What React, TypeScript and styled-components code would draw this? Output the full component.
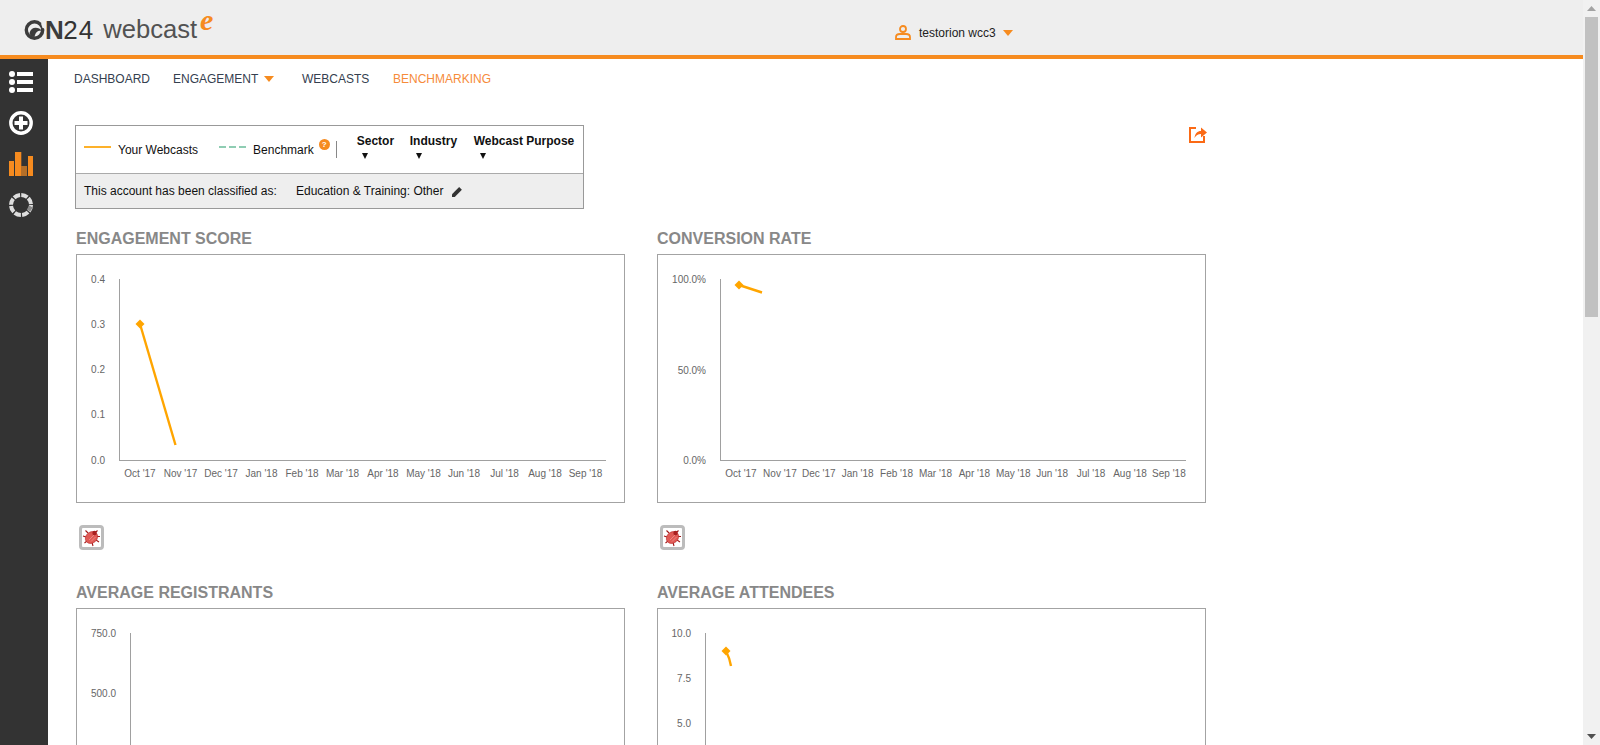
import React from "react";
import styled, { createGlobalStyle } from "styled-components";

const Global = createGlobalStyle`
  html, body { margin: 0; padding: 0; height: 100%; overflow: hidden; background: #fff; }
  body { font-family: "Liberation Sans", Arial, sans-serif; }
  #root { height: 100%; }
`;

const Page = styled.div`display: flex; height: 745px; overflow: hidden;`;
const Viewport = styled.div`flex: 1; min-width: 0; display: flex; flex-direction: column;`;
const Scrollbar = styled.div`width: 17px; flex: none; background: #f1f1f1; display: flex; flex-direction: column; align-items: center; justify-content: space-between;`;
const ScrollTop = styled.div`display: flex; flex-direction: column; align-items: center;`;
const ScrollBtn = styled.div`height: 17px; display: flex; align-items: center; justify-content: center;`;
const Thumb = styled.div`width: 13px; height: 300px; background: #c1c1c1;`;

const Header = styled.header`
  height: 55px; flex: none; background: #eeeeee; border-bottom: 4px solid #f68b1f;
  display: grid; grid-template-columns: 895px auto; align-items: center;
`;
const Logo = styled.div`display: flex; align-items: center; padding-left: 24px; color: #3c3c3c; height: 55px; position: relative; top: 2px;`;
const LogoMark = styled.span`font-size: 26px; font-weight: 700; letter-spacing: -0.5px; line-height: 1;`;
const LogoLight = styled.span`font-weight: 400; letter-spacing: 1px; color: #333;`;
const LogoWord = styled.span`font-size: 25.6px; color: #525252; margin-left: 9px; line-height: 1;`;
const LogoE = styled.span`font-family: "Liberation Serif", serif; font-style: italic; font-weight: 700; font-size: 30px; color: #f68b1f; margin: -20px 0 0 3px; line-height: 1;`;
const User = styled.div`display: flex; align-items: center; font-size: 12px; color: #222; position: relative; top: 5px;`;
const UserName = styled.span`margin: 0 7px 0 8px;`;

const Body = styled.div`flex: 1; min-height: 0; display: flex;`;
const Sidebar = styled.aside`width: 48px; flex: none; background: #333333; display: flex; flex-direction: column; align-items: center; padding-top: 7px; padding-right: 6px; box-sizing: border-box; gap: 9px;`;
const SideIcon = styled.div`height: 32px; display: flex; align-items: center; justify-content: center;`;
const Content = styled.main`flex: 1; min-width: 0; padding-left: 27px;`;

const Nav = styled.nav`height: 38px; box-sizing: border-box; padding-top: 2px; margin-left: -1px; display: flex; align-items: center; font-size: 12px; color: #34404f;`;
const NavItem = styled.a<{ $active?: boolean; $w: number }>`
  width: ${(p) => p.$w}px; color: ${(p) => (p.$active ? "#f68b3a" : "#34404f")};
  display: flex; align-items: center; gap: 6px;
`;

const Toolbar = styled.div`width: 1132px; margin: 28px 0 20px; display: flex; justify-content: space-between; align-items: flex-start;`;
const Panel = styled.div`width: 507px; border: 1px solid #999; font-size: 12px; color: #111;`;
const PanelTop = styled.div`height: 47px; border-bottom: 1px solid #aaa; display: flex; align-items: center; padding-left: 8px; position: relative;`;
const PanelBottom = styled.div`height: 34px; background: #eeeeee; display: flex; align-items: center; padding-left: 8px;`;
const LegendSwatch = styled.span<{ $dash?: boolean }>`
  width: 27px; height: 2px; margin-right: 7px; position: relative; top: -3px; flex: none;
  background: ${(p) => (p.$dash ? "repeating-linear-gradient(90deg, #8fcdb3 0 7px, transparent 7px 10px)" : "#fdb12a")};
`;
const LegendLabel = styled.span<{ $mr: number }>`margin-right: ${(p) => p.$mr}px; font-size: 12px; white-space: nowrap; flex: none;`;
const Help = styled.span`
  width: 11px; height: 11px; border-radius: 50%; background: #f68b1f; color: #fff; font-size: 8px; font-weight: 700; flex: none;
  display: flex; align-items: center; justify-content: center; margin: -10px 6px 0 5px;
`;
const Sep = styled.span`width: 1px; height: 17px; background: #888; margin-right: 20px; flex: none;`;
const Select = styled.div<{ $w: number; $pad: number }>`
  width: ${(p) => p.$w}px; display: flex; flex-direction: column; font-weight: 700; font-size: 12px; margin-top: -7px; flex: none; white-space: nowrap;
  & > i { display: block; width: 0; height: 0; margin: 5px 0 0 ${(p) => p.$pad}px;
    border-left: 3.5px solid transparent; border-right: 3.5px solid transparent; border-top: 6px solid #111; }
`;
const ClassLabel = styled.span`width: 212px; font-size: 12px;`;
const ClassValue = styled.span`font-size: 12px; margin-right: 9px;`;

const Grid = styled.div`display: grid; grid-template-columns: 549px 549px; column-gap: 32px; row-gap: 33px; margin-left: 1px;`;
const Cell = styled.section``;
const Title = styled.h2`margin: 0 0 6px; padding-top: 1px; font-size: 16px; line-height: 18px; font-weight: 700; color: #888888;`;
const ChartBox = styled.div`width: 547px; height: 247px; border: 1px solid #a3a3a3;`;
const ChartSvg = styled.svg`display: block;`;
const AxisText = styled.text`font-family: "Liberation Sans", Arial, sans-serif; font-size: 10px; fill: #666;`;
const BugBtn = styled.button`
  display: block; margin: 22px 0 0 3px; width: 25px; height: 25px; box-sizing: border-box; padding: 0;
  border: 3px solid #bcbcbc; border-radius: 4px; background: #fff; 
`;

const months = ["Oct '17","Nov '17","Dec '17","Jan '18","Feb '18","Mar '18","Apr '18","May '18","Jun '18","Jul '18","Aug '18","Sep '18"];

type ChartDef = {
  title: string; axisX: number; axisEnd: number; labelX: number; xStart: number; step: number;
  ticks: [string, number][]; bottom: number; point?: [number, number]; path?: string;
};

const Chart = ({ c }: { c: ChartDef }) => (
  <ChartSvg width={547} height={247} viewBox="0 0 547 247">
    <line x1={c.axisX + 0.5} y1={24} x2={c.axisX + 0.5} y2={c.bottom} stroke="#a0a0a0" />
    <line x1={c.axisX} y1={c.bottom + 0.5} x2={c.axisEnd} y2={c.bottom + 0.5} stroke="#a0a0a0" />
    {c.ticks.map(([t, y]) => (
      <AxisText key={t} x={c.labelX} y={y + 3.5} textAnchor="end">{t}</AxisText>
    ))}
    {months.map((m, i) => (
      <AxisText key={m} x={c.xStart + c.step * i} y={c.bottom + 17} textAnchor="middle">{m}</AxisText>
    ))}
    {c.path && <path d={c.path} fill="none" stroke="#ffa500" strokeWidth={2.4} />}
    {c.point && (
      <path d={`M${c.point[0] - 4.5} ${c.point[1]}L${c.point[0]} ${c.point[1] - 4.5}L${c.point[0] + 4.5} ${c.point[1]}L${c.point[0]} ${c.point[1] + 4.5}Z`} fill="#ffa500" />
    )}
  </ChartSvg>
);

const Bug = () => (
  <svg width="19" height="19" viewBox="0 0 19 19">
    <g stroke="#a01818" strokeWidth="1.1" fill="none">
      <path d="M6 5L3.500 2.500M4 9L1 8M5 13L2.500 15M10 14.500L11 18M14 12L17 14M15 8.500L18 8.500M13.500 4.500L15.500 2.500" />
    </g>
    <ellipse cx="9.5" cy="9.5" rx="5.5" ry="6.6" transform="rotate(50 9.5 9.5)" fill="#e05a55" stroke="#b92a2a" strokeWidth="0.6" />
    <path d="M7 12L12 7M9 13.500L13.500 9" stroke="#f0918c" strokeWidth="0.8" />
    <circle cx="12.5" cy="5" r="2.2" fill="#a82020" />
  </svg>
);

const Caret = () => (
  <svg width="10" height="6" viewBox="0 0 10 6"><path d="M0 0H10L5 6Z" fill="#f68b1f" /></svg>
);

const charts: ChartDef[] = [
  { title: "ENGAGEMENT SCORE", axisX: 42, axisEnd: 529, labelX: 28, xStart: 63, step: 40.5, bottom: 205,
    ticks: [["0.4",24],["0.3",69],["0.2",114],["0.1",159],["0.0",205]], point: [63,69], path: "M63 69L98.500 190" },
  { title: "CONVERSION RATE", axisX: 62, axisEnd: 528, labelX: 48, xStart: 83, step: 38.9, bottom: 205,
    ticks: [["100.0%",24],["50.0%",115],["0.0%",205]], point: [81,30], path: "M81 30L104 37.500" },
  { title: "AVERAGE REGISTRANTS", axisX: 53, axisEnd: 529, labelX: 39, xStart: 73, step: 39.5, bottom: 205,
    ticks: [["750.0",24],["500.0",84],["250.0",145],["0.0",205]] },
  { title: "AVERAGE ATTENDEES", axisX: 47, axisEnd: 528, labelX: 33, xStart: 68, step: 40, bottom: 205,
    ticks: [["10.0",24],["7.5",69],["5.0",114],["2.5",159],["0.0",205]], point: [68,42], path: "M68 42Q72 50 73 57" },
];

export default function App() {
  return (
    <>
      <Global />
      <Page>
        <Viewport>
          <Header>
            <Logo>
              <svg width="21" height="20" viewBox="0 0 21 20">
                <circle cx="10.5" cy="10" r="8.2" fill="none" stroke="#3c3c3c" strokeWidth="3.4" />
                <path d="M5.500 13C7 6.500 14 6 18.500 11C14.500 10 11.500 11.500 10.500 17C8 17 6 15.500 5.500 13Z" fill="#3c3c3c" />
                <path d="M17 3.500L21 1.500V8.500L18.500 8Z" fill="#eeeeee" />
              </svg>
              <LogoMark>N<LogoLight>24</LogoLight></LogoMark>
              <LogoWord>webcast</LogoWord>
              <LogoE>e</LogoE>
            </Logo>
            <User>
              <svg width="16" height="15" viewBox="0 0 16 15" fill="none" stroke="#f68b1f" strokeWidth="1.8">
                <circle cx="8" cy="4" r="3" />
                <path d="M1 14V12C1 10 3 9 5 9H11C13 9 15 10 15 12V14Z" />
              </svg>
              <UserName>testorion wcc3</UserName>
              <Caret />
            </User>
          </Header>
          <Body>
            <Sidebar>
              <SideIcon>
                <svg width="24" height="22" viewBox="0 0 24 22" fill="#fff">
                  <circle cx="3" cy="3" r="3" /><circle cx="3" cy="11" r="3" /><circle cx="3" cy="19" r="3" />
                  <rect x="8" y="1" width="16" height="4" /><rect x="8" y="9" width="16" height="4" /><rect x="8" y="17" width="16" height="4" />
                </svg>
              </SideIcon>
              <SideIcon>
                <svg width="24" height="24" viewBox="0 0 24 24">
                  <circle cx="12" cy="12" r="10.2" fill="none" stroke="#fff" strokeWidth="3.4" />
                  <path d="M10 5.500h4V10h4.500v4H14v4.500h-4V14H5.500V10H10Z" fill="#fff" />
                </svg>
              </SideIcon>
              <SideIcon>
                <svg width="24" height="24" viewBox="0 0 24 24">
                  <rect x="0" y="9" width="5" height="15" fill="#f68b1f" />
                  <rect x="6" y="0" width="6" height="24" fill="#f68b1f" />
                  <rect x="12" y="14" width="6" height="10" fill="#b56f28" />
                  <rect x="19" y="4" width="5" height="20" fill="#f68b1f" />
                  <rect x="12" y="0" width="1" height="14" fill="#6d4d30" />
                </svg>
              </SideIcon>
              <SideIcon>
                <svg width="24" height="24" viewBox="0 0 24 24" fill="none">
                  <circle cx="12" cy="12" r="10" stroke="#dedede" strokeWidth="4" strokeDasharray="6.6 1.25" />
                  <path d="M19.500 17.500L22 13.500" stroke="#8a8a8a" strokeWidth="4" />
                </svg>
              </SideIcon>
            </Sidebar>
            <Content>
              <Nav>
                <NavItem $w={99}>DASHBOARD</NavItem>
                <NavItem $w={129}>ENGAGEMENT <Caret /></NavItem>
                <NavItem $w={91}>WEBCASTS</NavItem>
                <NavItem $w={110} $active>BENCHMARKING</NavItem>
              </Nav>
              <Toolbar>
                <Panel>
                  <PanelTop>
                    <LegendSwatch />
                    <LegendLabel $mr={21}>Your Webcasts</LegendLabel>
                    <LegendSwatch $dash />
                    <LegendLabel $mr={0}>Benchmark</LegendLabel>
                    <Help>?</Help>
                    <Sep />
                    <Select $w={53} $pad={5}>Sector<i /></Select>
                    <Select $w={64} $pad={6}>Industry<i /></Select>
                    <Select $w={100} $pad={6}>Webcast Purpose<i /></Select>
                  </PanelTop>
                  <PanelBottom>
                    <ClassLabel>This account has been classified as:</ClassLabel>
                    <ClassValue>Education &amp; Training: Other</ClassValue>
                    <svg width="11" height="11" viewBox="0 0 10 10"><path d="M0 10V7.600L6.500 1 9 3.500 2.500 10Z" fill="#333" /></svg>
                  </PanelBottom>
                </Panel>
                <svg width="18" height="18" viewBox="0 0 18 18" fill="none">
                  <path d="M7 3H1V17H15V11" stroke="#fb6a15" strokeWidth="2" />
                  <path d="M5.500 13C6 8.500 8.500 6 12 6V2.500L18 7.500L12 12.500V9C9 9 7 10.500 5.500 13Z" fill="#fb6a15" />
                </svg>
              </Toolbar>
              <Grid>
                {charts.map((c) => (
                  <Cell key={c.title}>
                    <Title>{c.title}</Title>
                    <ChartBox><Chart c={c} /></ChartBox>
                    <BugBtn><Bug /></BugBtn>
                  </Cell>
                ))}
              </Grid>
            </Content>
          </Body>
        </Viewport>
        <Scrollbar>
          <ScrollTop>
            <ScrollBtn><svg width="9" height="5" viewBox="0 0 9 5"><path d="M0 5H9L4.500 0Z" fill="#a3a3a3" /></svg></ScrollBtn>
            <Thumb />
          </ScrollTop>
          <ScrollBtn><svg width="9" height="5" viewBox="0 0 9 5"><path d="M0 0H9L4.500 5Z" fill="#505050" /></svg></ScrollBtn>
        </Scrollbar>
      </Page>
    </>
  );
}
